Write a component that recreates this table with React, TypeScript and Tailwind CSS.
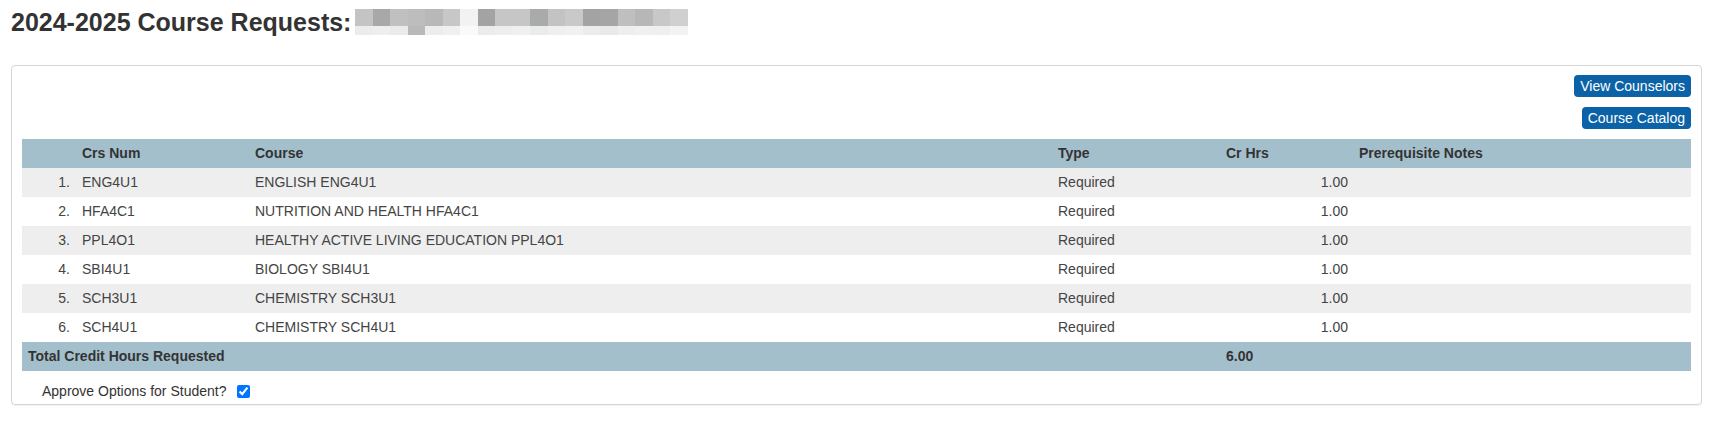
import React from 'react';

type CourseRow = {
  code: string;
  title: string;
  type: string;
  hours: string;
};

const COURSES: CourseRow[] = [
  { code: 'ENG4U1', title: 'ENGLISH ENG4U1', type: 'Required', hours: '1.00' },
  { code: 'HFA4C1', title: 'NUTRITION AND HEALTH HFA4C1', type: 'Required', hours: '1.00' },
  { code: 'PPL4O1', title: 'HEALTHY ACTIVE LIVING EDUCATION PPL4O1', type: 'Required', hours: '1.00' },
  { code: 'SBI4U1', title: 'BIOLOGY SBI4U1', type: 'Required', hours: '1.00' },
  { code: 'SCH3U1', title: 'CHEMISTRY SCH3U1', type: 'Required', hours: '1.00' },
  { code: 'SCH4U1', title: 'CHEMISTRY SCH4U1', type: 'Required', hours: '1.00' },
];

// pixelated name that sits after the title (redacted in the source)
const MOSAIC_TOP = [
  '#c4c4c4', '#a8a8a8', '#c0c0c0', '#bdbdbd', '#b8b8b8', '#c7c7c7', '#f2f2f2',
  '#a3a3a3', '#c6c6c6', '#c6c6c6', '#a9abab', '#c3c3c3', '#c9c9c9', '#a3a3a3',
  '#a5a5a5', '#bfbfbf', '#b7b7b7', '#c8c8c8', '#d0d0d0',
];
const MOSAIC_BOTTOM = [
  '#ececec', '#eeeeee', '#ebebeb', '#b9b9b9', '#ededed', '#f0f0f0', '#fafafa',
  '#ececec', '#eeeeee', '#f0f0f0', '#ebebeb', '#efefef', '#f1f1f1', '#ececec',
  '#eaeaea', '#eeeeee', '#f0f0f0', '#efefef', '#f3f3f3',
];

const Mosaic: React.FC = () => (
  <div className="ml-[4px] mt-[2px] flex flex-col">
    <div className="flex">
      {MOSAIC_TOP.map((c, i) => (
        <div key={i} className="h-[17px] w-[17.5px]" style={{ backgroundColor: c }} />
      ))}
    </div>
    <div className="flex">
      {MOSAIC_BOTTOM.map((c, i) => (
        <div key={i} className="h-[9px] w-[17.5px]" style={{ backgroundColor: c }} />
      ))}
    </div>
  </div>
);

const App: React.FC = () => {
  return (
    <div className="min-h-screen bg-white pl-[11px] pr-[9px] text-[14px] text-[#333] font-['Liberation_Sans',Arial,sans-serif]">
      <div className="flex items-start pt-[7px]">
        <h1 className="text-[25px] font-bold leading-[30px] text-[#333]">2024-2025 Course Requests:</h1>
        <Mosaic />
      </div>

      <div className="mt-[28px] rounded-[4px] border border-[#d5d5d5] px-[10px] pt-[9px] pb-[3px] shadow-[0_1px_1px_rgba(0,0,0,0.05)]">
        <div className="flex flex-col items-end gap-[10px]">
          <button className="h-[22px] rounded-[4px] bg-[#0b62a6] px-[6px] text-[14px] leading-[22px] text-white">
            View Counselors
          </button>
          <button className="h-[22px] rounded-[4px] bg-[#0b62a6] px-[6px] text-[14px] leading-[22px] text-white">
            Course Catalog
          </button>
        </div>

        <table className="mt-[10px] w-full table-fixed border-collapse">
          <colgroup>
            <col className="w-[55px]" />
            <col className="w-[173px]" />
            <col className="w-[803px]" />
            <col className="w-[168px]" />
            <col className="w-[133px]" />
            <col />
          </colgroup>
          <thead>
            <tr className="h-[29px] bg-[#a3bfcc] text-left font-bold text-[#333]">
              <th className="p-0" />
              <th className="pl-[5px]">Crs Num</th>
              <th className="pl-[5px]">Course</th>
              <th className="pl-[5px]">Type</th>
              <th className="pl-[5px]">Cr Hrs</th>
              <th className="pl-[5px]">Prerequisite Notes</th>
            </tr>
          </thead>
          <tbody className="text-[#444]">
            {COURSES.map((c, i) => (
              <tr key={c.code} className={`h-[29px] ${i % 2 === 0 ? 'bg-[#eeeeee]' : 'bg-white'}`}>
                <td className="pr-[7px] text-right">{i + 1}.</td>
                <td className="pl-[5px]">{c.code}</td>
                <td className="pl-[5px]">{c.title}</td>
                <td className="pl-[5px]">{c.type}</td>
                <td className="pr-[6px] text-right">{c.hours}</td>
                <td className="pl-[5px]" />
              </tr>
            ))}
            <tr className="h-[29px] bg-[#a3bfcc] font-bold text-[#333]">
              <td colSpan={4} className="pl-[6px]">Total Credit Hours Requested</td>
              <td className="pl-[5px]">6.00</td>
              <td />
            </tr>
          </tbody>
        </table>

        <div className="mt-[10px] flex items-center pl-[20px] leading-[20px] text-[#333]">
          <span>Approve Options for Student?</span>
          <input type="checkbox" defaultChecked className="ml-[11px] h-[13px] w-[13px]" />
        </div>
      </div>
    </div>
  );
};

export default App;
